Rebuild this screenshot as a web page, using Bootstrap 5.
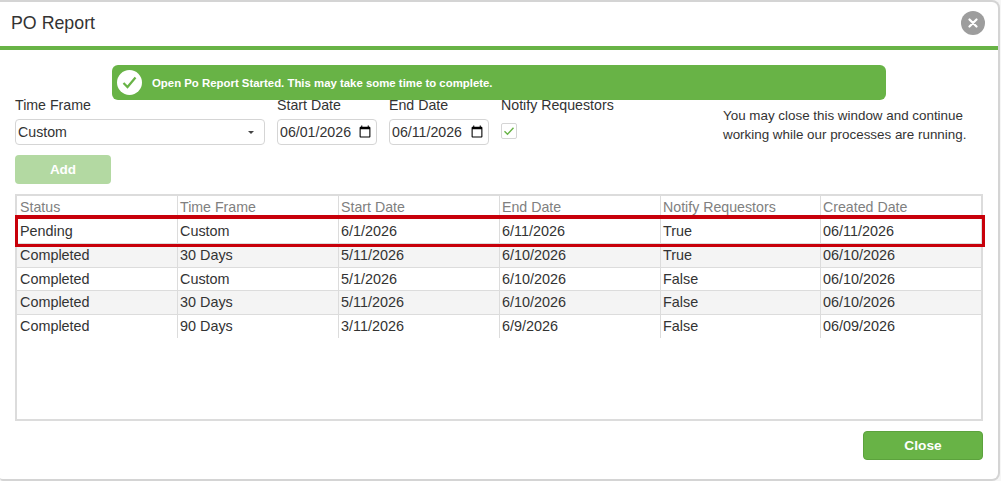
<!DOCTYPE html>
<html lang="en">
<head>
<meta charset="utf-8">
<title>PO Report</title>
<link href="https://cdn.jsdelivr.net/npm/bootstrap@5.3.0/dist/css/bootstrap.min.css" rel="stylesheet">
<style>
html,body{height:100%}
body{background:#f6f6f6;font-family:"Liberation Sans",Arial,sans-serif;font-size:14px;color:#333;overflow:hidden;padding:0 1px 0 0}
.po-window{position:relative;height:481px;background:#fff;border:2px solid #d4d4d4;border-left:0;border-radius:0 8px 8px 3px;display:flex;flex-direction:column}
.po-head{height:48px;flex:none;border-bottom:4px solid #68b346;padding:0 11px;display:flex;align-items:center;justify-content:space-between}
.po-title{font-size:17.8px;font-weight:400;margin:0;color:#333}
.po-x{width:24px;height:24px;border-radius:50%;background:#9d9d9d;border:0;padding:0;display:flex;align-items:center;justify-content:center;margin-right:2px;margin-top:-2px}
.po-body{flex:1;padding:0 15px;display:flex;flex-direction:column;min-height:0}
.po-toast{position:absolute;left:112px;top:63px;width:774px;height:35px;background:#68b346;border-radius:6px;color:#fff;font-weight:700;font-size:11.4px;display:flex;align-items:center;gap:10px;padding-left:5px;z-index:2}
.po-toast-text{padding-top:2px}
.po-tick{width:25px;height:25px;border-radius:50%;background:#fff;display:flex;align-items:center;justify-content:center;flex:none}
.po-form{display:flex;margin-top:47px;height:60px}
.po-lbl{display:block;font-size:14.2px;line-height:16px;margin:0 0 6px;color:#333}
.po-f1{width:250px;margin-right:12px}
.po-f2{width:100px;margin-right:12px}
.po-f3{width:222px}
.po-ctl.form-select,.po-ctl.form-control{height:26px;min-height:0;font-size:14.2px;color:#333;border:1px solid #d5d5d5;border-radius:4px;box-shadow:none}
.po-ctl.form-select{padding:2px 20px 0 2px;background-size:6px 3px;background-position:right 10px center;background-image:url("data:image/svg+xml,%3Csvg xmlns='http://www.w3.org/2000/svg' viewBox='0 0 8 4'%3E%3Cpath fill='%23444' d='M0 0h8L4 4z'/%3E%3C/svg%3E")}
.po-ctl.form-control{padding:0 2px;line-height:24px}
.po-chk.form-check-input{width:16px;height:16px;margin:10px 0 0;border:1px solid #d5d5d5;border-radius:2px;display:block;background-color:#fff;background-size:12px 10px;background-image:url("data:image/svg+xml,%3Csvg xmlns='http://www.w3.org/2000/svg' viewBox='0 0 12 10'%3E%3Cpath fill='none' stroke='%2368b346' stroke-width='1.4' d='M1.5 5.2l3 3 6-6.4'/%3E%3C/svg%3E")}
.po-note{margin:9px 0 0 0;font-size:13.4px;line-height:19px;color:#333;white-space:nowrap}
.po-add.btn{width:96px;height:29px;padding:1px 0 0;margin-top:-2px;background:#b3d9a2;border:0;border-radius:4px;color:#fff;font-weight:700;font-size:13.5px;opacity:1}
.po-gridbox{position:relative;margin-top:10px;height:227px;width:968px;border:2px solid #dcdcdc;flex:none}
.po-table.table{width:964px;table-layout:fixed;margin:0;font-size:14.4px;color:#333}
.po-table th,.po-table td{padding:0 2px 0 2.5px;height:24px;line-height:20px;font-weight:400;border:0;border-left:1px solid #dcdcdc;border-bottom:1px solid #dcdcdc;vertical-align:middle;white-space:nowrap;box-shadow:none}
.po-table tbody tr:nth-child(even) td{background:#f4f4f4}
.po-table tbody tr:nth-child(1) td{height:25px}
.po-table tbody tr:nth-child(3) td{height:23px}
.po-table th:first-child,.po-table td:first-child{border-left:0;padding-left:3px}
.po-table tbody tr:last-child td{border-bottom:0}
.po-table th{color:#808080;font-size:14.2px;height:22px}
.po-mark{position:absolute;left:-2px;top:19px;width:970px;height:32px;border:3px solid #c8000a;border-top-width:4px;pointer-events:none}
.po-foot{display:flex;justify-content:flex-end;margin-top:10px}
.po-close.btn{width:120px;height:29px;padding:1px 0 0;background:#68b346;border:1px solid #5ca23d;border-radius:4px;color:#fff;font-weight:700;font-size:13.7px}
</style>
</head>
<body>
<div class="po-window">
  <div class="po-head">
    <h5 class="po-title">PO Report</h5>
    <button class="po-x" type="button" aria-label="Close">
      <svg width="10" height="10" viewBox="0 0 10 10"><path d="M1.5 1.5l7 7M8.5 1.5l-7 7" stroke="#fff" stroke-width="2.2" stroke-linecap="round"/></svg>
    </button>
  </div>
  <div class="po-toast">
    <span class="po-tick"><svg width="15" height="13" viewBox="0 0 15 13"><path d="M1.5 7l4 4 8-9.5" fill="none" stroke="#68b346" stroke-width="2.2"/></svg></span>
    <span class="po-toast-text">Open Po Report Started. This may take some time to complete.</span>
  </div>
  <div class="po-body">
    <div class="po-form">
      <div class="po-f1">
        <label class="po-lbl" for="tf">Time Frame</label>
        <select class="form-select po-ctl" id="tf"><option>Custom</option></select>
      </div>
      <div class="po-f2">
        <label class="po-lbl" for="sd">Start Date</label>
        <input class="form-control po-ctl" id="sd" type="date" value="2026-06-01">
      </div>
      <div class="po-f2">
        <label class="po-lbl" for="ed">End Date</label>
        <input class="form-control po-ctl" id="ed" type="date" value="2026-06-11">
      </div>
      <div class="po-f3">
        <label class="po-lbl" for="nr">Notify Requestors</label>
        <input class="form-check-input po-chk" id="nr" type="checkbox" checked>
      </div>
      <p class="po-note">You may close this window and continue<br>working while our processes are running.</p>
    </div>
    <div><button class="btn po-add" type="button" disabled>Add</button></div>
    <div class="po-gridbox">
      <table class="table po-table">
        <colgroup><col style="width:160px"><col style="width:161px"><col style="width:161px"><col style="width:161px"><col style="width:160px"><col></colgroup>
        <thead><tr><th>Status</th><th>Time Frame</th><th>Start Date</th><th>End Date</th><th>Notify Requestors</th><th>Created Date</th></tr></thead>
        <tbody>
          <tr><td>Pending</td><td>Custom</td><td>6/1/2026</td><td>6/11/2026</td><td>True</td><td>06/11/2026</td></tr>
          <tr><td>Completed</td><td>30 Days</td><td>5/11/2026</td><td>6/10/2026</td><td>True</td><td>06/10/2026</td></tr>
          <tr><td>Completed</td><td>Custom</td><td>5/1/2026</td><td>6/10/2026</td><td>False</td><td>06/10/2026</td></tr>
          <tr><td>Completed</td><td>30 Days</td><td>5/11/2026</td><td>6/10/2026</td><td>False</td><td>06/10/2026</td></tr>
          <tr><td>Completed</td><td>90 Days</td><td>3/11/2026</td><td>6/9/2026</td><td>False</td><td>06/09/2026</td></tr>
        </tbody>
      </table>
      <div class="po-mark"></div>
    </div>
    <div class="po-foot"><button class="btn po-close" type="button">Close</button></div>
  </div>
</div>
<script src="https://cdn.jsdelivr.net/npm/bootstrap@5.3.0/dist/js/bootstrap.bundle.min.js"></script>
</body>
</html>
